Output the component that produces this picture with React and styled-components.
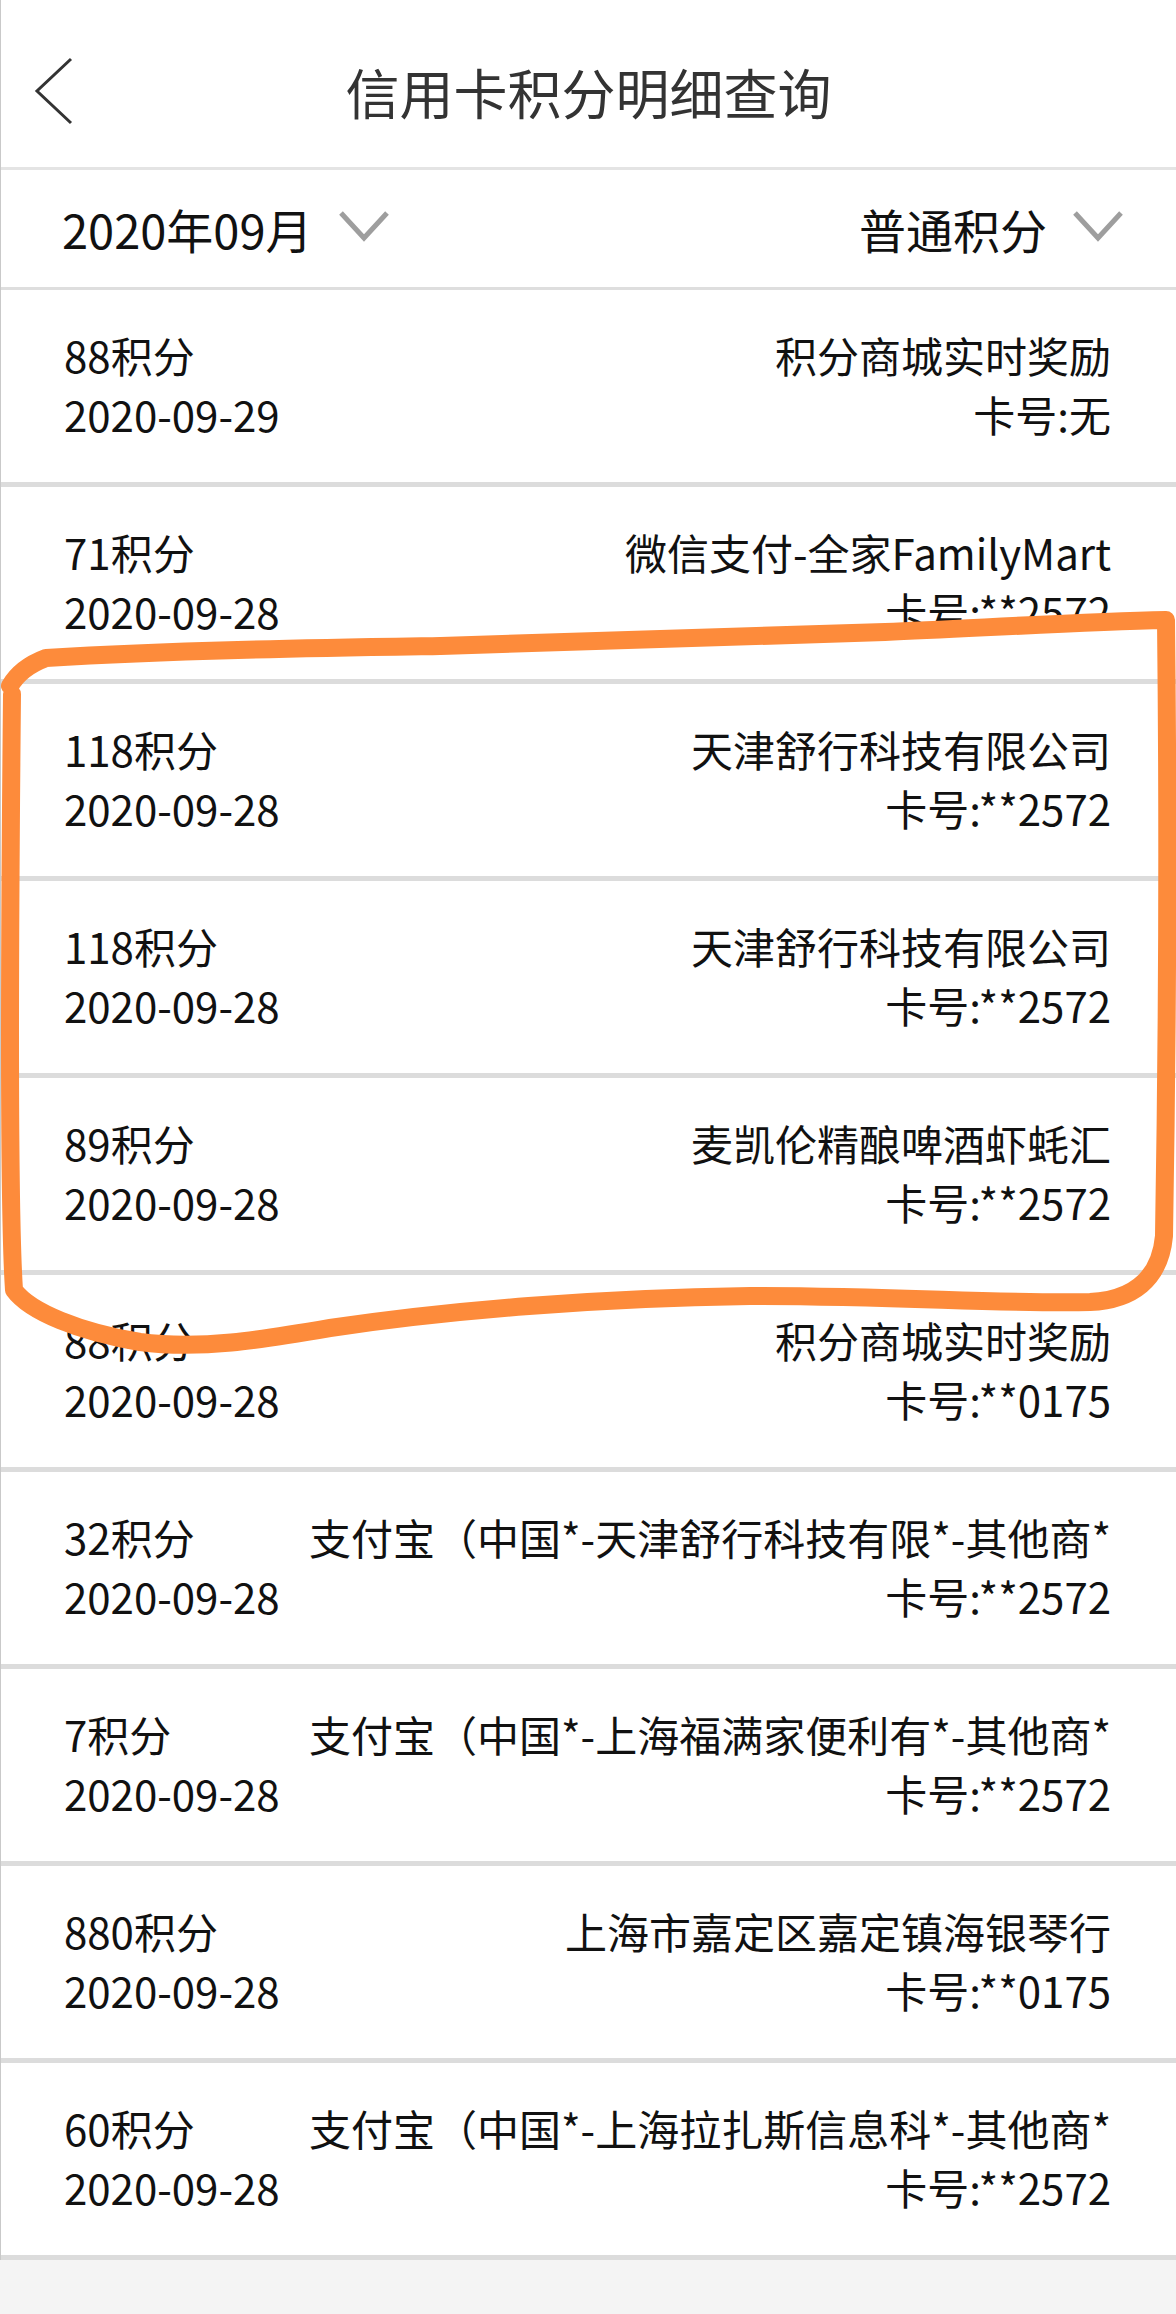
import React from 'react'
import styled, { createGlobalStyle } from 'styled-components'

const records = [
    { points: 88, date: '2020-09-29', merchant: '积分商城实时奖励', card: '无' },
    { points: 71, date: '2020-09-28', merchant: '微信支付-全家FamilyMart', card: '**2572' },
    { points: 118, date: '2020-09-28', merchant: '天津舒行科技有限公司', card: '**2572' },
    { points: 118, date: '2020-09-28', merchant: '天津舒行科技有限公司', card: '**2572' },
    { points: 89, date: '2020-09-28', merchant: '麦凯伦精酿啤酒虾蚝汇', card: '**2572' },
    { points: 88, date: '2020-09-28', merchant: '积分商城实时奖励', card: '**0175' },
    { points: 32, date: '2020-09-28', merchant: '支付宝（中国*-天津舒行科技有限*-其他商*', card: '**2572' },
    { points: 7, date: '2020-09-28', merchant: '支付宝（中国*-上海福满家便利有*-其他商*', card: '**2572' },
    { points: 880, date: '2020-09-28', merchant: '上海市嘉定区嘉定镇海银琴行', card: '**0175' },
    { points: 60, date: '2020-09-28', merchant: '支付宝（中国*-上海拉扎斯信息科*-其他商*', card: '**2572' },
]

const BackIcon = () => (
    <svg width="40" height="68" viewBox="0 0 40 68">
        <polyline points="37,2 3,34 37,66" fill="none" stroke="#333" strokeWidth="3" />
    </svg>
)

const Caret = () => (
    <svg width="52" height="32" viewBox="0 0 52 32">
        <polyline points="3,3 26,28 49,3" fill="none" stroke="#9e9e9e" strokeWidth="5" />
    </svg>
)

// hand drawn marker around the highlighted records
const Marker = () => (
    <MarkerLayer width="1176" height="2314" viewBox="0 0 1176 2314">
        <path
            d="M 10 686 C 18 672 30 664 46 658 C 180 650 320 648 440 646 C 600 642 760 636 885 632
               C 980 628 1080 622 1166 620
               C 1168 800 1168 1000 1164 1236 C 1160 1280 1132 1300 1090 1302
               C 1000 1304 900 1296 750 1296 C 600 1298 450 1310 330 1328
               C 260 1340 200 1350 140 1342 C 80 1332 30 1312 14 1290
               C 8 1200 10 900 12 694"
            fill="none"
            stroke="#fd8b3b"
            strokeWidth="18"
            strokeLinecap="round"
            strokeLinejoin="round"
        />
    </MarkerLayer>
)

const App = () => {
    return (
        <Page>
            <GlobalStyle />
            <Sheet>
                <Header>
                    <Back><BackIcon /></Back>
                    <Title>信用卡积分明细查询</Title>
                    <span />
                </Header>
                <Filters>
                    <Picker>2020年09月<Caret /></Picker>
                    <Picker>普通积分<Caret /></Picker>
                </Filters>
                {records.map((r, i) => (
                    <Row key={i}>
                        <Column>
                            <Line>{r.points}积分</Line>
                            <Line>{r.date}</Line>
                        </Column>
                        <Column right>
                            <Line>{r.merchant}</Line>
                            <Line>卡号:{r.card}</Line>
                        </Column>
                    </Row>
                ))}
            </Sheet>
            <Marker />
        </Page>
    )
}

const GlobalStyle = createGlobalStyle`
    body {
        margin: 0;
        font-family: "Noto Sans CJK SC", "Noto Sans", sans-serif;
        background: #f4f4f4;
    }
`

const Page = styled.div`
    position: relative;
    width: 1176px;
    min-height: 2314px;
    background: #f4f4f4;
    overflow: hidden;
`

const Sheet = styled.div`
    background: #fff;
    border-left: 1px solid #c9c9c9;
`

const Header = styled.div`
    display: grid;
    grid-template-columns: 1fr auto 1fr;
    align-items: center;
    height: 153px;
    padding-top: 14px;
    border-bottom: 3px solid #e4e4e4;
`

const Back = styled.div`
    display: flex;
    padding-left: 33px;
`

const Title = styled.div`
    font-size: 54px;
    line-height: 64px;
    color: #333;
    margin-top: 2px;
`

const Filters = styled.div`
    display: flex;
    justify-content: space-between;
    align-items: center;
    height: 117px;
    padding: 0 52px 0 61px;
    border-bottom: 3px solid #dedede;
`

const Picker = styled.div`
    display: flex;
    align-items: center;
    gap: 25px;
    font-size: 47px;
    line-height: 60px;
    color: #111;

    svg {
        margin-top: -6px;
    }
`

const Row = styled.div`
    display: flex;
    justify-content: space-between;
    align-items: center;
    height: 192px;
    padding: 0 65px 0 63px;
    border-bottom: 5px solid #dcdcdc;
`

const Column = styled.div`
    display: flex;
    flex-direction: column;
    align-items: ${props => props.right ? 'flex-end' : 'flex-start'};
    margin-top: -4px;
`

const Line = styled.div`
    font-size: 42px;
    line-height: 59px;
    color: #111;
    white-space: nowrap;
`

const MarkerLayer = styled.svg`
    position: absolute;
    left: 0;
    top: 0;
    pointer-events: none;
`

export default App
